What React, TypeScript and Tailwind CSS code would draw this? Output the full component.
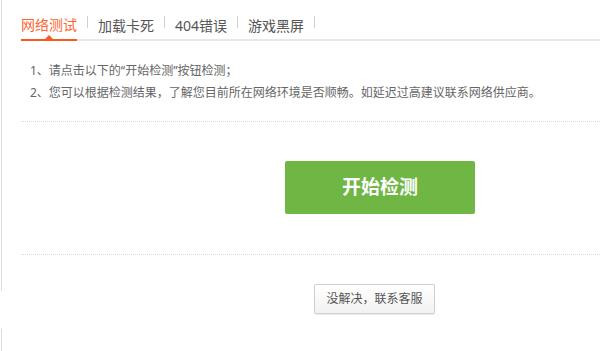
import { useState } from "react";

const tabs = ["网络测试", "加载卡死", "404错误", "游戏黑屏"];

const tips = [
  "1、请点击以下的“开始检测”按钮检测；",
  "2、您可以根据检测结果，了解您目前所在网络环境是否顺畅。如延迟过高建议联系网络供应商。",
];

const App = () => {
  const [active, setActive] = useState(0);

  return (
    <div
      className="flex min-h-[351px] w-[600px] overflow-hidden bg-white"
      style={{ fontFamily: '"Noto Sans", "Noto Sans CJK SC", sans-serif' }}
    >
      {/* left edge of the panel */}
      <div className="ml-px flex w-px shrink-0 flex-col">
        <div className="h-[291px] bg-[#dcdcdc]" />
        <div className="h-[38px]" />
        <div className="flex-1 bg-[#dcdcdc]" />
      </div>

      <main className="flex min-w-0 flex-1 flex-col pl-[19px]">
        {/* tabs */}
        <nav className="flex h-[41px] items-start border-b-2 border-[#e8e8e8] pt-[11px]">
          {tabs.map((tab, i) => (
            <div key={tab} className="flex items-start">
              <button
                onClick={() => setActive(i)}
                className={
                  i === active
                    ? "relative h-[30px] border-b-2 border-[#ff5a1e] text-[14px] leading-[20px] text-[#ff6630]"
                    : "h-[30px] text-[14px] leading-[20px] text-[#555555]"
                }
              >
                {tab}
                {i === active && (
                  <span className="absolute bottom-0 left-1/2 -ml-[4px] h-0 w-0 border-x-[4px] border-b-[4px] border-x-transparent border-b-[#ff5a1e]" />
                )}
              </button>
              <span className="mx-[10px] mt-[5px] h-[12px] w-px bg-[#d0d0d0]" />
            </div>
          ))}
        </nav>

        {/* tips */}
        <div className="ml-[9px] pt-[19px] text-[12px] leading-[22px] text-[#666666]">
          {tips.map((t) => (
            <p key={t} className="whitespace-nowrap">{t}</p>
          ))}
        </div>

        <div className="mt-[17px] border-t border-dotted border-[#d8d8d8]" />

        <div className="pt-[39px] pb-[40px]">
          <button className="ml-[264px] h-[53px] w-[190px] rounded-[2px] bg-[#6fb644] text-[19px] font-bold text-white">
            开始检测
          </button>
        </div>

        <div className="border-t border-dotted border-[#d8d8d8]" />

        <div className="pt-[29px]">
          <button className="ml-[293px] h-[30px] w-[121px] rounded-[2px] border border-[#cfcfcf] bg-gradient-to-b from-white to-[#f2f2f2] text-[12px] text-[#555555] shadow-[0_1px_1px_rgba(0,0,0,0.08)]">
            没解决，联系客服
          </button>
        </div>
      </main>
    </div>
  );
};

export default App;
